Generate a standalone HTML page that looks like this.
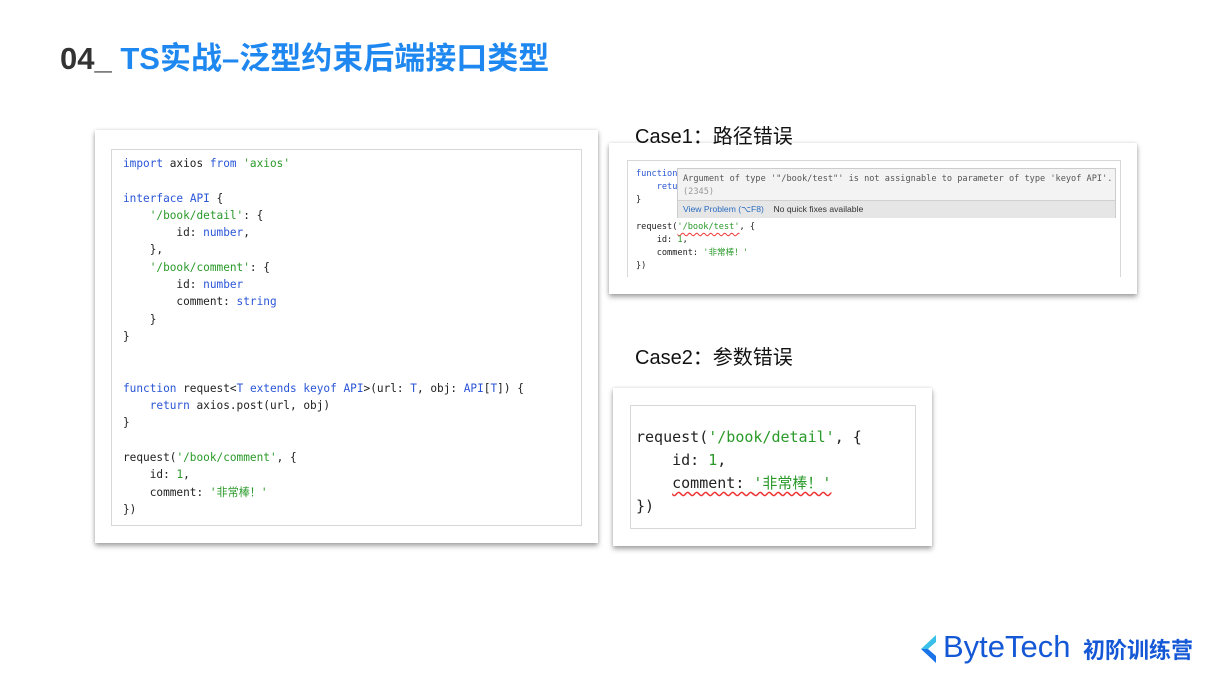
<!DOCTYPE html>
<html><head><meta charset="utf-8"><style>
body{margin:0;width:1217px;height:680px;background:#fff;position:relative;overflow:hidden;font-family:"Liberation Sans","Noto Sans CJK SC",sans-serif}
.abs{position:absolute}
.card{position:absolute;background:#fff;box-shadow:0 3px 5px rgba(0,0,0,.35),0 0 3px rgba(0,0,0,.12)}
.inner{position:absolute;border:1px solid #d8d8d8;background:#fff}
.code{position:absolute;font-family:"DejaVu Sans Mono","Noto Sans CJK SC",monospace;white-space:pre;color:#222}
.k{color:#2a56d6}.s{color:#2a9a2a}
.sq{text-decoration:underline wavy #e33;text-decoration-skip-ink:none;text-underline-offset:3px}
</style></head><body>
<div class="abs" style="left:60px;top:38px;font-size:31px;font-weight:bold;line-height:42px;color:#333">04_ <span style="color:#1e88f0">TS实战–泛型约束后端接口类型</span></div>

<div class="card" style="left:95px;top:130px;width:503px;height:413px"></div>
<div class="inner" style="left:111px;top:149px;width:469px;height:375px"></div>
<div class="code" style="left:123px;top:155px;font-size:11.1px;line-height:17.3px"><span class="k">import</span> axios <span class="k">from</span> <span class="s">'axios'</span>

<span class="k">interface</span> <span class="k">API</span> {
    <span class="s">'/book/detail'</span>: {
        id: <span class="k">number</span>,
    },
    <span class="s">'/book/comment'</span>: {
        id: <span class="k">number</span>
        comment: <span class="k">string</span>
    }
}


<span class="k">function</span> request&lt;<span class="k">T</span> <span class="k">extends</span> <span class="k">keyof</span> <span class="k">API</span>&gt;(url: <span class="k">T</span>, obj: <span class="k">API</span>[<span class="k">T</span>]) {
    <span class="k">return</span> axios.post(url, obj)
}

request(<span class="s">'/book/comment'</span>, {
    id: <span class="s">1</span>,
    comment: <span class="s">'非常棒！'</span>
})</div>

<div class="card" style="left:609px;top:143px;width:528px;height:151px"></div>
<div class="abs" style="left:635px;top:120px;font-size:20px;color:#111;z-index:2">Case1：路径错误</div>
<div class="inner" style="left:627px;top:160px;width:492px;height:116px;border-bottom:none"></div>
<div class="code" style="left:636px;top:168px;font-size:8.6px;line-height:13.2px"><span class="k">function</span>
    <span class="k">retu</span>
}

request(<span class="s sq">'/book/test'</span>, {
    id: <span class="s">1</span>,
    comment: <span class="s">'非常棒！'</span>
})</div>
<div class="abs" style="left:677px;top:168px;width:439px;height:50px;background:#f3f3f3;border:1px solid #ccc;box-sizing:border-box"></div>
<div class="abs" style="left:678px;top:200px;width:437px;height:17px;background:#e6e6e6;border-top:1px solid #d0d0d0"></div>
<div class="code" style="left:683px;top:173px;font-size:8.6px;line-height:13px;color:#555">Argument of type '"/book/test"' is not assignable to parameter of type 'keyof API'.
<span style="color:#999">(2345)</span></div>
<div class="abs" style="left:683px;top:204px;font-size:8.6px;color:#333"><span style="color:#2a6cc0">View Problem (⌥F8)</span>&nbsp;&nbsp;&nbsp;&nbsp;No quick fixes available</div>

<div class="abs" style="left:635px;top:341px;font-size:20px;color:#111">Case2：参数错误</div>
<div class="card" style="left:613px;top:388px;width:319px;height:158px"></div>
<div class="inner" style="left:630px;top:405px;width:284px;height:122px"></div>
<div class="code" style="left:636px;top:426px;font-size:15px;line-height:23px">request(<span class="s">'/book/detail'</span>, {
    id: <span class="s">1</span>,
    <span class="sq">comment: <span class="s">'非常棒！'</span></span>
})</div>

<svg class="abs" style="left:918px;top:634px" width="20" height="30" viewBox="0 0 20 30"><path d="M18 1 L3 15 L10 15 L18 8Z" fill="#3ac0e8"/><path d="M3 15 L18 29 L18 22 L10 15Z" fill="#1a73e8"/></svg>
<div class="abs" style="left:943px;top:629px;font-size:31px;color:#1558d6;line-height:36px">ByteTech</div>
<div class="abs" style="left:1083px;top:637px;font-size:22px;font-weight:bold;color:#1558d6;line-height:28px">初阶训练营</div>
</body></html>
